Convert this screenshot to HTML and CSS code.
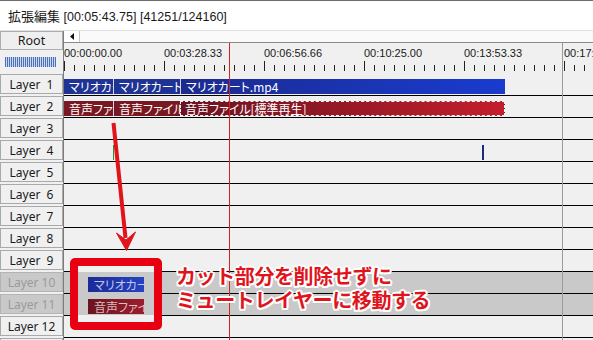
FILE: index.html
```html
<!DOCTYPE html>
<html lang="ja">
<head>
<meta charset="utf-8">
<title>拡張編集</title>
<link rel="stylesheet" href="styles.css">
</head>
<body>
<div class="app">
  <div class="titlebar"><span class="title-name">拡張編集</span> [00:05:43.75] [41251/124160]</div>
  <div class="editor">
    <div class="side">
      <div class="side-head">
        <div class="root-btn">Root</div>
        <div class="zoom-bar"></div>
      </div>
      <div class="layer"><div class="layer-box">Layer  1</div></div>
      <div class="layer"><div class="layer-box">Layer  2</div></div>
      <div class="layer"><div class="layer-box">Layer  3</div></div>
      <div class="layer"><div class="layer-box">Layer  4</div></div>
      <div class="layer"><div class="layer-box">Layer  5</div></div>
      <div class="layer"><div class="layer-box">Layer  6</div></div>
      <div class="layer"><div class="layer-box">Layer  7</div></div>
      <div class="layer"><div class="layer-box">Layer  8</div></div>
      <div class="layer"><div class="layer-box">Layer  9</div></div>
      <div class="layer muted"><div class="layer-box">Layer 10</div></div>
      <div class="layer muted"><div class="layer-box">Layer 11</div></div>
      <div class="layer"><div class="layer-box">Layer 12</div></div>
      <div class="layer"><div class="layer-box">Layer 13</div></div>
    </div>
    <div class="timeline">
      <div class="scrollbar">
        <div class="scroll-btn">
          <svg width="4" height="7" viewBox="0 0 4 7"><polygon points="4,0 4,7 0,3.5" fill="#111"/></svg>
        </div>
      </div>
      <div class="ruler">
        <div class="major"><span class="time">00:00:00.00</span><div class="ticks"></div></div>
        <div class="major"><span class="time">00:03:28.33</span><div class="ticks"></div></div>
        <div class="major"><span class="time">00:06:56.66</span><div class="ticks"></div></div>
        <div class="major"><span class="time">00:10:25.00</span><div class="ticks"></div></div>
        <div class="major"><span class="time">00:13:53.33</span><div class="ticks"></div></div>
        <div class="major"><span class="time">00:17:21.66</span><div class="ticks"></div></div>
      </div>
      <div class="rows">
        <div class="row">
          <div class="clip video sep" style="width:50px">マリオカート.mp4</div>
          <div class="clip video sep" style="width:67px">マリオカート.mp4</div>
          <div class="clip video long" style="width:324px">マリオカート.mp4</div>
        </div>
        <div class="row">
          <div class="clip audio sep" style="width:50px">音声ファイル[標準再生]</div>
          <div class="clip audio" style="width:66px">音声ファイル[標準再生]</div>
          <div class="clip audio long selected" style="width:325px">音声ファイル[標準再生]</div>
        </div>
        <div class="row">
          <div class="mark navy" style="margin-left:49px"></div>
        </div>
        <div class="row">
          <div class="mark green" style="margin-left:49px"></div>
          <div class="mark navy wide" style="margin-left:368px"></div>
        </div>
        <div class="row"></div>
        <div class="row"></div>
        <div class="row"></div>
        <div class="row"></div>
        <div class="row"></div>
        <div class="row muted"></div>
        <div class="row muted"></div>
        <div class="row"></div>
        <div class="row"></div>
      </div>
    </div>
  </div>

  <div class="scene-end"></div>
  <div class="cursor"></div>

  <svg class="arrow" width="593" height="340" viewBox="0 0 593 340">
    <line x1="113.5" y1="123" x2="125.5" y2="238" stroke="#e1141c" stroke-width="4"/>
    <path d="M116.5,233 L126.5,250.5 L135.5,232 L126,240 Z" fill="#e1141c" stroke="#e1141c" stroke-width="1" stroke-linejoin="round"/>
  </svg>

  <div class="callout">
    <div class="mini video">マリオカート.mp4</div>
    <div class="mini audio">音声ファイル</div>
  </div>

  <div class="note">カット部分を削除せずに<br>ミュートレイヤーに移動する</div>
</div>
</body>
</html>
```
FILE: styles.css
```css
* {
  box-sizing: border-box;
  margin: 0;
  padding: 0;
}

html, body {
  width: 593px;
  height: 340px;
  overflow: hidden;
}

body {
  background: #f0f0f0;
  font-family: "Noto Sans", "Noto Sans CJK JP", sans-serif;
  color: #1a1a1a;
}

.app {
  position: relative;
  width: 593px;
  height: 340px;
  overflow: hidden;
  display: flex;
  flex-direction: column;
}

.titlebar {
  flex: none;
  height: 31px;
  background: #fff;
  border-top: 1px solid #6e6e6e;
  border-bottom: 1px solid #e2e2e2;
  padding-left: 8px;
  font: 12.5px/29px "Liberation Sans", "Noto Sans CJK JP", sans-serif;
  color: #1a1a1a;
  white-space: nowrap;
}

.title-name {
  font-family: "Noto Sans CJK JP", sans-serif;
  font-size: 13px;
}

.editor {
  flex: 1;
  display: flex;
  min-height: 0;
}

/* left column */
.side {
  flex: none;
  width: 64px;
  border-right: 1px solid #7c7c7c;
  background: #f0f0f0;
}

.side-head {
  height: 43px;
}

.root-btn {
  width: 63px;
  height: 19px;
  border: 1px solid #adadad;
  background: #efefef;
  font-size: 12.5px;
  line-height: 17px;
  text-align: center;
  color: #1a1a1a;
}

.zoom-bar {
  width: 51px;
  height: 10px;
  margin: 7px 0 0 5px;
  background: repeating-linear-gradient(to right, #4a72ba 0 1px, #c9d6ee 1px 2px);
}

.layer {
  height: 22px;
  padding-bottom: 2px;
}

.layer-box {
  width: 63px;
  height: 20px;
  border: 1px solid #a9a9a9;
  background: #f0f0f0;
  font-size: 12px;
  line-height: 19px;
  text-align: center;
  white-space: pre;
  color: #1a1a1a;
}

.layer.muted .layer-box {
  background: #c9c9c9;
  border-color: #b4b4b4;
  color: #9a9a9a;
}

/* timeline */
.timeline {
  flex: 1;
  min-width: 0;
  display: flex;
  flex-direction: column;
  background: #f0f0f0;
}

.scrollbar {
  flex: none;
  height: 12px;
  display: flex;
  background: #fafafa;
  border-bottom: 1px solid #8a8a8a;
}

.scroll-btn {
  width: 16px;
  height: 11px;
  display: flex;
  align-items: center;
  justify-content: center;
  background: #fff;
  border-right: 1px solid #c4c4c4;
}

.ruler {
  flex: none;
  height: 31px;
  display: flex;
  padding-top: 4px;
}

.major {
  flex: none;
  width: 100px;
  display: flex;
  flex-direction: column;
}

.time {
  font: 11px/13px "Liberation Sans", sans-serif;
  color: #1a1a1a;
  white-space: nowrap;
}

.ticks {
  height: 10px;
  margin-top: 1px;
  background:
    linear-gradient(#222, #222) left top / 1px 100% no-repeat,
    repeating-linear-gradient(to right, #222 0 1px, transparent 1px 10px) left bottom / 100% 6px no-repeat;
}

.rows {
  flex: 1;
}

.row {
  height: 22px;
  display: flex;
  align-items: flex-start;
  padding-top: 5px;
  border-bottom: 1px solid #000;
}

.row.muted {
  background: #c9c9c9;
}

.clip {
  flex: none;
  height: 15px;
  padding-left: 5px;
  overflow: hidden;
  white-space: nowrap;
  color: #fff;
  font: 12px/15px "Noto Sans CJK JP", sans-serif;
  font-feature-settings: "palt";
}

.clip.video {
  background: #1f3394;
}

.clip.audio {
  background: #7a1822;
}

.clip.sep {
  border-right: 1px solid #d4d8ee;
}

.clip.video.long {
  background: linear-gradient(to right, #1b2b8f, #1a3bcf);
}

.clip.audio.long {
  background: linear-gradient(to right, #6a1320, #c41e2c);
}

.clip.selected {
  border: 1px dashed #f4f4f4;
  line-height: 13px;
  padding-left: 4px;
}

.mark {
  flex: none;
  width: 1px;
  height: 15px;
}

.mark.wide {
  width: 2px;
}

.mark.navy {
  background: #1e2a7a;
}

.mark.green {
  background: #2e8b2e;
}

/* overlays */
.scene-end {
  position: absolute;
  left: 562px;
  top: 43px;
  bottom: 0;
  width: 1px;
  background: #9a9a9a;
}

.cursor {
  position: absolute;
  left: 229px;
  top: 43px;
  bottom: 0;
  width: 1px;
  background: #d42020;
}

.arrow {
  position: absolute;
  left: 0;
  top: 0;
  pointer-events: none;
}

.callout {
  position: absolute;
  left: 70px;
  top: 258px;
  width: 92px;
  height: 72px;
  border: 8px solid #e60012;
  border-radius: 5px;
  padding: 11px 0 0 10px;
  display: flex;
  flex-direction: column;
  gap: 7px;
  background: linear-gradient(to bottom, #f0f0f0 0 6px, #c9c9c9 6px 49px, #f0f0f0 49px);
}

.mini {
  width: 56px;
  height: 15px;
  padding-left: 6px;
  overflow: hidden;
  white-space: nowrap;
  font: 12px/15px "Noto Sans CJK JP", sans-serif;
  font-feature-settings: "palt";
  color: rgba(255, 255, 255, 0.72);
}

.mini.video {
  background: linear-gradient(to right, #1b2b98, #2643c4);
}

.mini.audio {
  background: linear-gradient(to right, #6c1420, #9c1e2c);
}

.note {
  position: absolute;
  left: 176px;
  top: 264px;
  font: 700 20px/24px "Noto Sans CJK JP", sans-serif;
  letter-spacing: -0.4px;
  color: #e0141c;
  white-space: nowrap;
  text-shadow:
    2px 0 0 #fff, -2px 0 0 #fff, 0 2px 0 #fff, 0 -2px 0 #fff,
    1.5px 1.5px 0 #fff, -1.5px 1.5px 0 #fff, 1.5px -1.5px 0 #fff, -1.5px -1.5px 0 #fff,
    1px 2px 1px rgba(0, 0, 0, 0.25);
}
```
